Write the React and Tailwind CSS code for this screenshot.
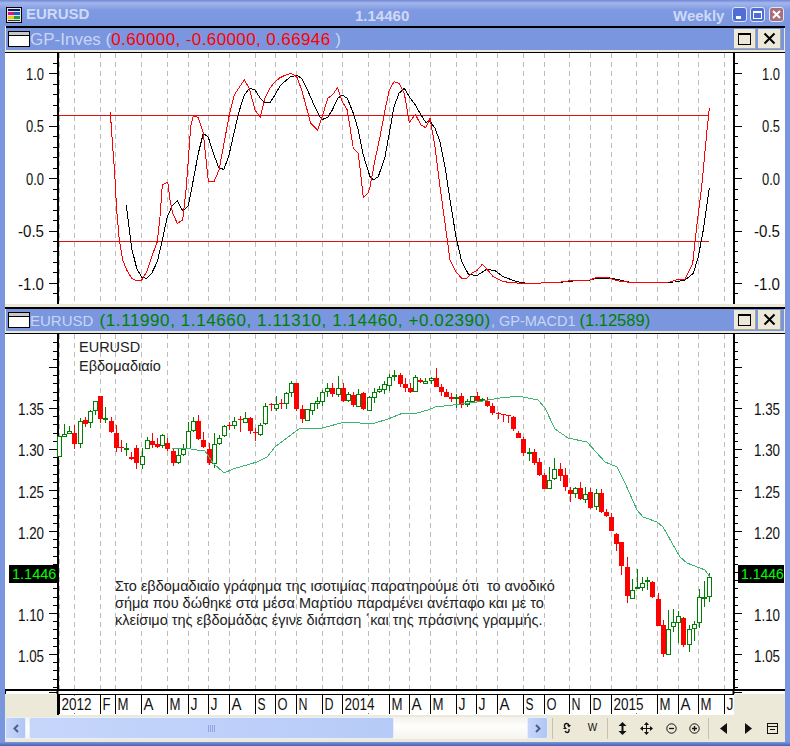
// weekly EURUSD chart window, XP style
const GRID = [59, 74, 100, 115, 141, 167, 188, 208, 229, 255, 275, 296, 322, 342, 368, 389, 409, 430, 456, 476, 497, 523, 544, 569, 590, 611, 636, 657, 678, 698, 724];

const MONTHS = [
  [59, "2012"], [100, "F"], [115, "M"], [141, "A"], [167, "M"], [188, "J"], [208, "J"], [229, "A"], [255, "S"], [275, "O"], [296, "N"], [322, "D"], [342, "2014"],
  [389, "M"], [409, "A"], [430, "M"], [456, "J"], [476, "J"], [497, "A"], [523, "S"], [544, "O"], [569, "N"], [590, "D"], [611, "2015"], [657, "M"], [678, "A"], [698, "M"], [724, "J"],
];
const LABEL_W = { F: 8, M: 11, A: 10, J: 7, S: 8, O: 10, N: 9, D: 9 };

// traced from the picture: colour, body top, body bottom, wick top, wick bottom (3x crop units)
const C6 = [
  ["g",168,232,168,232],["g",163,170,133,170],["g",153,163,138,163],["r",159,191,135,207],["g",123,193,115,203],["r",120,131,110,140],["g",93,130,90,143],["g",63,93,63,105],["r",48,117,48,130],["g",114,116,82,128],
  ["r",124,157,112,160],["r",159,203,135,215],["r",201,205,180,215],["g",205,211,190,227],["r",231,236,215,240],["r",204,250,195,267],["g",229,256,205,268],["g",180,208,172,208],["r",184,194,160,205],["r",192,200,175,205],
  ["g",165,198,163,205],["r",189,208,175,212],["r",213,248,205,258],["g",226,250,205,252],["g",208,226,193,228],["g",153,208,125,208],["g",124,153,110,155],["r",123,178,105,180],["r",180,200,155,203],["r",208,248,190,255],
  ["g",193,253,160,265],["g",175,193,165,195],["g",138,169,135,170],["r",134,137,125,150],["g",124,139,110,148],["r",118,120,108,155],["g",115,128,95,130],["r",114,152,112,162],["r",156,160,145,182],["g",136,166,128,168],["g",78,133,68,135],
];
const C7 = [
  ["r",132,135,128,152],["g",133,148,108,152],["r",129,133,118,148],["g",99,133,95,148],["g",70,100,62,112],["r",69,148,69,152],["r",148,177,135,190],["g",148,182,148,182],["g",129,152,129,165],["g",124,133,112,146],
  ["g",96,125,90,137],["g",85,97,70,112],["r",84,101,70,112],["g",85,104,48,110],["r",84,122,68,125],["g",103,124,95,125],["r",105,135,95,140],["g",103,140,88,142],["r",99,147,95,150],["g",112,152,108,152],
  ["g",97,115,85,128],["g",88,97,78,98],["g",72,89,62,103],["g",52,77,42,92],["g",46,52,30,62],["r",46,72,40,80],["r",72,84,55,95],["r",84,95,70,100],["g",52,95,45,95],["r",60,65,55,70],
  ["g",64,72,55,72],["g",55,64,50,72],["r",54,80,25,82],["r",80,95,72,108],["r",95,112,88,112],["r",112,118,100,125],["g",112,114,103,145],["r",108,135,100,145],["g",123,135,118,142],["g",108,125,108,130],
  ["r",108,122,97,125],["g",118,120,113,125],["r",122,138,112,142],["r",138,160,128,165],["r",160,163,155,178],["r",163,165,163,185],["r",165,169,165,188],
];
const C8 = [
  ["r",80,118,78,122],["r",128,143,122,145],["r",147,188,140,198],["g",185,190,175,212],["r",187,218,178,225],["r",216,254,205,258],["r",255,297,248,298],["g",270,298,230,298],["g",238,268,205,270],["r",237,257,218,272],
  ["r",255,292,235,303],["r",300,312,290,335],["g",295,311,290,325],["r",295,327,277,330],["g",313,331,292,340],["r",307,354,295,356],["g",310,352,298,360],["r",310,365,297,368],["r",367,378,358,380],["r",382,422,370,422],
  ["r",433,461,430,482],["r",457,527,455,555],["r",532,617,502,638],["g",601,628,568,628],["g",592,596,537,596],["g",578,593,560,602],["g",570,574,562,600],["r",575,621,572,623],["r",627,707,610,707],["r",705,792,690,800],
  ["g",716,796,660,796],["g",695,712,658,725],["g",677,700,662,760],["r",685,765,680,772],["g",718,766,705,785],["g",701,718,693,752],["g",620,700,597,715],["g",620,622,572,650],["g",560,620,548,635],
];
const lift = (rows, y0) => rows.map(([c, a, b, d, e]) => [c, y0 + a / 3, y0 + b / 3, y0 + d / 3, y0 + e / 3]);
const CANDLES = [...lift(C6, 380), ...lift(C7, 360), ...lift(C8, 390)];

const MA = [[172,448],[185,448],[197,450],[205,451],[213,463],[224,473],[233,469],[257,462],[267,457],[275,447],[287,438],[300,428],[305,428],[322,428],[345,422],[360,423],[375,423],[388,419],[403,413],[417,413],[428,410],[435,407],[453,405],[477,402],[500,398],[510,397],[518,396],[538,400],[545,408],[555,429],[568,438],[587,442],[605,462],[617,467],[625,483],[637,510],[643,517],[657,522],[663,527],[680,557],[687,563],[705,570],[710,577]];

const RED_A = [[31,157],[38,260],[44,340],[50,450],[58,540],[68,600],[80,630],[95,655],[110,663],[125,660],[140,635],[155,590],[172,545],[180,470],[187,375],[203,366],[210,420],[218,460],[232,490],[248,480],[258,390],[265,300],[272,200],[280,168],[295,172],[310,220],[325,363],[342,365],[357,330],[372,250],[388,165],[403,105],[417,83],[433,60],[448,85],[465,150],[481,172],[495,115],[510,85],[525,65],[540,53],[557,45],[572,40],[590,50],[605,90],[620,145],[632,190],[653,210],[668,165],[683,115],[697,105],[713,83],[727,125],[742,150],[760,265],[775,280],[790,412],[805,398]];
const RED_B = [[0,380],[15,300],[30,230],[45,150],[58,90],[72,65],[87,70],[103,100],[118,188],[136,163],[153,195],[167,203],[180,175],[195,260],[210,380],[225,490],[240,600],[258,635],[275,655],[290,655],[305,640],[320,632],[337,613],[355,632],[370,650],[400,665],[440,669],[470,670],[560,668],[610,661],[660,660],[680,652],[710,652],[740,662],[780,667],[900,666],[925,658],[945,658],[968,610],[980,500],[995,380],[1010,220],[1018,145]];
const BLK_A = [[79,435],[87,500],[95,565],[110,625],[125,652],[140,655],[155,640],[172,605],[187,540],[202,470],[217,437],[232,423],[248,452],[265,438],[280,360],[295,280],[310,220],[325,232],[342,285],[357,325],[372,328],[387,285],[403,215],[417,155],[433,105],[448,85],[465,90],[481,115],[495,128],[510,128],[525,105],[540,78],[557,62],[572,50],[590,46],[605,55],[620,85],[640,130],[660,172],[668,178],[683,172],[697,150],[713,115],[727,105],[742,115],[760,160],[775,210],[790,285]];
const BLK_B = [[0,350],[10,360],[25,350],[45,290],[58,220],[72,140],[87,100],[103,85],[118,110],[136,135],[153,165],[167,187],[180,183],[195,205],[210,245],[225,320],[240,420],[258,530],[275,605],[295,642],[320,647],[350,628],[375,632],[400,650],[440,665],[470,670],[560,668],[610,663],[660,660],[680,655],[720,654],[750,660],[780,667],[915,666],[945,660],[970,640],[985,590],[1000,510],[1010,440],[1018,385]];

const crop = (pts, x0) => pts.map(([x, y]) => `${(x0 + x / 3).toFixed(1)},${(60 + y / 3).toFixed(1)}`);
const pts = (a, b) => [...crop(a, 100), ...crop(b, 370)].join(" ");

function Grid({ y1, y2 }) {
  return GRID.map((x) => (
    <line key={x} x1={x + 0.5} x2={x + 0.5} y1={y1} y2={y2} stroke="#bdbdbd" strokeDasharray="5 4" shapeRendering="crispEdges" />
  ));
}

function Axis({ y1, y2, ticks, labels }) {
  return (
    <g fontSize="16" fill="#111">
      <line x1="57.5" x2="57.5" y1={y1} y2={y2} stroke="#000" strokeWidth="2" shapeRendering="crispEdges" />
      <line x1="733.5" x2="733.5" y1={y1} y2={y2} stroke="#000" strokeWidth="2" shapeRendering="crispEdges" />
      {ticks.map(([y, major]) => (
        <g key={y} stroke="#000" shapeRendering="crispEdges">
          <line x1={major ? 49 : 53} x2="57" y1={y} y2={y} />
          <line x1="734" x2={major ? 742 : 738} y1={y} y2={y} />
        </g>
      ))}
      {labels.map(([y, t]) => {
        const ww = t.length === 3 ? 18 : 26;
        return (
          <g key={t}>
            <text x={44 - ww} y={y + 7} textLength={ww} lengthAdjust="spacingAndGlyphs">{t}</text>
            <text x={780 - ww} y={y + 7} textLength={ww} lengthAdjust="spacingAndGlyphs">{t}</text>
          </g>
        );
      })}
    </g>
  );
}

function TopChart() {
  const ticks = [];
  for (let k = -1; k <= 21; k++) ticks.push([Math.round(73.3 + 10.48 * k) + 0.5, k % 5 === 0]);
  const labels = [[73, "1.0"], [125, "0.5"], [178, "0.0"], [230, "-0.5"], [283, "-1.0"]];
  return (
    <svg className="block bg-white" width="780" height="251" viewBox="5 53 780 251">
      <Grid y1={53} y2={304} />
      <Axis y1={53} y2={304} ticks={ticks} labels={labels} />
      <line x1="59" x2="709" y1="115.5" y2="115.5" stroke="#e01010" shapeRendering="crispEdges" />
      <line x1="59" x2="709" y1="241.5" y2="241.5" stroke="#e01010" shapeRendering="crispEdges" />
      <polyline points={pts(BLK_A, BLK_B)} fill="none" stroke="#000" shapeRendering="crispEdges" />
      <polyline points={pts(RED_A, RED_B)} fill="none" stroke="#ff0000" shapeRendering="crispEdges" />
    </svg>
  );
}

function Candle({ i, d }) {
  const [c, top, bot, hi, lo] = d;
  const x = Math.round(59 + 5.16 * i);
  const t = Math.round(top);
  const b = Math.max(Math.round(bot), t + 1);
  const wick = (
    <line x1={x + 0.5} x2={x + 0.5} y1={Math.round(hi)} y2={Math.round(lo)} stroke={c === "r" ? "#ff0000" : "#008000"} />
  );
  if (c === "r") {
    return (
      <g shapeRendering="crispEdges">
        {wick}
        <rect x={x - 2} y={t} width="5" height={b - t} fill="#ff0000" />
      </g>
    );
  }
  return (
    <g shapeRendering="crispEdges">
      {wick}
      {b - t < 3 ? (
        <rect x={x - 2} y={t} width="5" height="2" fill="#008000" />
      ) : (
        <rect x={x - 1.5} y={t + 0.5} width="4" height={b - t - 1} fill="#fff" stroke="#008000" />
      )}
    </g>
  );
}

function MainChart() {
  const ticks = [];
  for (let k = -8; k <= 34; k++) ticks.push([Math.round(408 + 8.2 * k) + 0.5, k % 5 === 0]);
  const labels = [[408, "1.35"], [449, "1.30"], [491, "1.25"], [532, "1.20"], [614, "1.10"], [655, "1.05"]];
  return (
    <svg className="block bg-white" width="780" height="355" viewBox="5 334 780 355">
      <Grid y1={334} y2={689} />
      <Axis y1={334} y2={689} ticks={ticks} labels={labels} />
      {CANDLES.map((d, i) => (
        <Candle key={i} i={i} d={d} />
      ))}
      <polyline points={MA.map((p) => p.join(",")).join(" ")} fill="none" stroke="#3cb371" shapeRendering="crispEdges" />
    </svg>
  );
}

function TimeAxis() {
  return (
    <svg className="block" width="677" height="21" viewBox="57 694 677 21">
      <rect x="57" y="694" width="677" height="21" fill="#fff" />
      <line x1="57" x2="734" y1="694.5" y2="694.5" stroke="#000" shapeRendering="crispEdges" />
      <line x1="57.5" x2="57.5" y1="694" y2="715" stroke="#000" strokeWidth="2" shapeRendering="crispEdges" />
      {[74, 368, 636].map((x) => (
        <line key={x} x1={x + 0.5} x2={x + 0.5} y1="695" y2="715" stroke="#777" strokeDasharray="1 17" shapeRendering="crispEdges" />
      ))}
      {MONTHS.map(([x, t]) => (
        <g key={x + t}>
          <line x1={x + 0.5} x2={x + 0.5} y1="694" y2="714" stroke="#000" shapeRendering="crispEdges" />
          <text x={x + 2.5} y="710" fontSize="16" fill="#111" textLength={t.length === 4 ? 30 : LABEL_W[t]} lengthAdjust="spacingAndGlyphs">{t}</text>
        </g>
      ))}
    </svg>
  );
}

function PanelIcon() {
  return (
    <div className="w-[22px] h-[16px] border border-black bg-white flex flex-col shrink-0">
      <div className="h-[4px] bg-[#c8c8c8] border-b border-black" />
    </div>
  );
}

function PanelButtons() {
  return (
    <div className="flex gap-[2px] ml-auto">
      <div className="w-[22px] h-[20px] bg-[#ece9d8] border-b border-r border-[#aca899] flex items-center justify-center">
        <div className="w-[13px] h-[12px] border border-black border-t-[2px]" />
      </div>
      <div className="w-[23px] h-[20px] bg-[#ece9d8] border-b border-r border-[#aca899] flex items-center justify-center">
        <svg width="13" height="13" viewBox="0 0 13 13">
          <path d="M1.5 1.5 L11.5 11.5 M11.5 1.5 L1.5 11.5" stroke="#000" strokeWidth="2" />
        </svg>
      </div>
    </div>
  );
}

function PanelHeader({ children }) {
  return (
    <div className="h-[22px] bg-[#7a96df] flex items-center pl-[2px] pr-[3px] text-[16px] leading-none text-[#c9d5f5] whitespace-pre">
      <PanelIcon />
      <span>{children}</span>
      <PanelButtons />
    </div>
  );
}

function WinBtn({ className, children }) {
  return (
    <div className={`w-[15px] h-[15px] rounded-[3px] border border-[#dfe6f8] flex items-center justify-center ${className}`}>
      {children}
    </div>
  );
}

function Tool({ w, children }) {
  return <div className={`${w} flex items-center justify-center`}>{children}</div>;
}

function Sep() {
  return <div className="w-px h-[21px] bg-[#c5c2b2] shrink-0" />;
}

function ScrollBtn({ d }) {
  return (
    <div className="w-[21px] h-[22px] rounded-[2px] border border-[#e8effc] bg-[linear-gradient(90deg,#c6d6fb,#b2c6f5)] flex items-center justify-center shrink-0">
      <svg width="8" height="9" viewBox="0 0 8 9">
        <path d={d} fill="none" stroke="#4d6185" strokeWidth="2" />
      </svg>
    </div>
  );
}

export default function App() {
  return (
    <div className="w-[790px] h-[746px] overflow-hidden bg-[#7a96df] font-['Liberation_Sans',Arial,sans-serif] flex flex-col relative">
      {/* Title bar */}
      <div className="h-[26px] shrink-0 bg-[linear-gradient(180deg,#6f88d8_0px,#a3b6ec_3px,#7f9ae2_10px,#7a96df_100%)] flex items-center relative text-[15px] font-bold text-[#ced9f6]">
        <svg className="ml-[6px] mt-[3px]" width="16" height="16" viewBox="0 0 16 16">
          <rect x="0.5" y="0.5" width="15" height="15" fill="#e8e8e0" stroke="#000" />
          <rect x="2" y="2" width="12" height="2" fill="#0a1a6a" />
          <rect x="2" y="5" width="6" height="3" fill="#e0108a" />
          <rect x="8" y="5" width="6" height="3" fill="#1060d0" />
          <rect x="2" y="9" width="6" height="3" fill="#e8d010" />
          <rect x="8" y="9" width="6" height="3" fill="#20a040" />
          <rect x="2" y="13" width="12" height="1" fill="#333" />
        </svg>
        <span className="ml-[4px] mt-[2px]">EURUSD</span>
        <span className="absolute left-[355px] top-[5px]">1.14460</span>
        <span className="absolute left-[673px] top-[5px]">Weekly</span>
        <div className="absolute left-[732px] top-[7px] flex gap-[3px]">
          <WinBtn className="bg-[#4f6ed6]">
            <div className="w-[5px] h-[3px] bg-white mt-[6px] -ml-[2px]" />
          </WinBtn>
          <WinBtn className="bg-[#4f6ed6]">
            <div className="w-[9px] h-[8px] border border-white border-t-[2px]" />
          </WinBtn>
          <WinBtn className="bg-[#a8707c] ml-[1px]">
            <svg width="9" height="9" viewBox="0 0 9 9">
              <path d="M1 1 L8 8 M8 1 L1 8" stroke="#fff" strokeWidth="2" />
            </svg>
          </WinBtn>
        </div>
      </div>

      {/* Client area */}
      <div className="mx-[5px] flex-1 flex flex-col bg-[#ece9d8] min-h-0">
        {/* Indicator pane */}
        <div className="h-[2px] bg-black ml-px" />
        <div className="px-px">
          <PanelHeader>
            <span className="text-[17px]">GP-Inves (</span>
            <span className="text-[17px] tracking-[0.4px] text-[#ff0000]">0.60000, -0.60000, 0.66946</span>
            <span className="text-[17px]"> )</span>
          </PanelHeader>
        </div>
        <div className="h-[2px] bg-[#ece9d8]" />
        <div className="h-px bg-black" />
        <TopChart />

        {/* Price pane */}
        <div className="h-[3px] bg-[#ece9d8]" />
        <div className="h-[2px] bg-black" />
        <div className="px-px">
          <PanelHeader>
            <span className="text-[15px]">EURUSD </span>
            <span className="text-[17px] tracking-[0.6px] pl-[2px] text-[#008000]">(1.11990, 1.14660, 1.11310, 1.14460, +0.02390)</span>
            <span className="text-[14.5px]">, GP-MACD1 </span>
            <span className="text-[16.5px] text-[#008000]">(1.12589)</span>
          </PanelHeader>
        </div>
        <div className="h-[2px] bg-[#ece9d8]" />
        <div className="h-px bg-black" />
        <div className="relative">
          <MainChart />
          <div className="absolute left-[74px] top-[4px] text-[14.5px] leading-[19px] text-[#222]">
            <div>EURUSD</div>
            <div>Εβδομαδιαίο</div>
          </div>
          <div className="absolute left-[110px] top-[244px] text-[14.5px] leading-[17px] text-[#222] whitespace-pre">
            <div>Στο εβδομαδιαίο γράφημα της ισοτιμίας παρατηρούμε ότι  το ανοδικό</div>
            <div>σήμα που δώθηκε στα μέσα Μαρτίου παραμένει ανέπαφο και με το</div>
            <div>κλείσιμο της εβδομάδας έγινε διάπαση ΄και της πράσινης γραμμής.</div>
          </div>
          <div className="absolute left-[4px] top-[231px] w-[48px] h-[18px] bg-black text-[#00ff00] text-[14.5px] leading-[18px] pl-[3px] whitespace-nowrap">1.1446</div>
          <div className="absolute left-[733px] top-[231px] w-[46px] h-[18px] bg-black text-[#00ff00] text-[14px] leading-[18px] pl-[3px] whitespace-nowrap">1.1446</div>
        </div>

        {/* Time axis */}
        <div className="h-[5px] border-t-2 border-black bg-white">
          <svg className="block" width="780" height="3" viewBox="0 0 780 3">
            <line x1="0.5" x2="0.5" y1="0" y2="3" stroke="#000" />
            <line x1="44" x2="52" y1="1.5" y2="1.5" stroke="#000" />
            <line x1="52.5" x2="52.5" y1="0" y2="3" stroke="#000" strokeWidth="2" />
            <line x1="728.5" x2="728.5" y1="0" y2="3" stroke="#000" strokeWidth="2" />
            <line x1="729" x2="737" y1="1.5" y2="1.5" stroke="#000" />
          </svg>
        </div>
        <div className="flex h-[21px]">
          <div className="w-[52px]" />
          <TimeAxis />
        </div>

        {/* Scroll bar and toolbar */}
        <div className="h-[2px]" />
        <div className="flex h-[22px]">
          <ScrollBtn d="M6 1 L2.5 4.5 L6 8" />
          <div className="w-[501px] bg-[linear-gradient(180deg,#f3f1ec,#fefefe_40%,#f6f4ee)] pl-[3px]">
            <div className="w-[365px] h-[22px] rounded-[2px] border border-[#e8effc] bg-[linear-gradient(90deg,#c6d6fb,#b7cbf8)] flex items-center justify-center gap-px">
              {[0, 1, 2, 3].map((n) => (
                <div key={n} className="w-px h-[7px] bg-[#8ea5dd]" />
              ))}
            </div>
          </div>
          <ScrollBtn d="M2 1 L5.5 4.5 L2 8" />
          <div className="flex-1 flex items-center text-[#111] pl-[4px]">
            <Sep />
            <Tool w="w-[28px]">
              <svg width="10" height="12" viewBox="0 0 10 12">
                <path d="M7 3 C6 1 3 1 2.5 3 L2.5 5 M7 7 L7 9 C6.5 11 4 11 3 9" fill="none" stroke="#111" strokeWidth="1.3" />
                <path d="M5 3 L9 3 L7 5.5 Z M1 7 L5 7 L3 4.5 Z" fill="#111" />
              </svg>
            </Tool>
            <Tool w="w-[23px]">
              <span className="text-[10px] leading-none">W</span>
            </Tool>
            <div className="w-[3px]" />
            <Sep />
            <Tool w="w-[28px]">
              <svg width="9" height="13" viewBox="0 0 9 13">
                <path d="M4.5 0 L8.5 4 L5.5 4 L5.5 9 L8.5 9 L4.5 13 L0.5 9 L3.5 9 L3.5 4 L0.5 4 Z" fill="#111" />
              </svg>
            </Tool>
            <Tool w="w-[20px]">
              <svg width="13" height="13" viewBox="0 0 13 13">
                <path d="M6.5 1 L6.5 12 M1 6.5 L12 6.5" stroke="#111" />
                <path d="M6.5 0 L9 3 L4 3 Z M6.5 13 L9 10 L4 10 Z M0 6.5 L3 4 L3 9 Z M13 6.5 L10 4 L10 9 Z" fill="#111" />
              </svg>
            </Tool>
            <Tool w="w-[30px]">
              <svg width="11" height="11" viewBox="0 0 11 11">
                <circle cx="5.5" cy="5.5" r="4.7" fill="none" stroke="#111" />
                <path d="M3 5.5 L8 5.5" stroke="#111" strokeWidth="1.3" />
              </svg>
            </Tool>
            <Tool w="w-[16px]">
              <svg width="11" height="11" viewBox="0 0 11 11">
                <circle cx="5.5" cy="5.5" r="4.7" fill="none" stroke="#111" />
                <path d="M3 5.5 L8 5.5 M5.5 3 L5.5 8" stroke="#111" strokeWidth="1.3" />
              </svg>
            </Tool>
            <div className="w-[6px]" />
            <Sep />
            <Tool w="w-[28px]">
              <svg width="7" height="11" viewBox="0 0 7 11">
                <path d="M7 0 L0 5.5 L7 11 Z" fill="#111" />
              </svg>
            </Tool>
            <Tool w="w-[22px]">
              <svg width="7" height="11" viewBox="0 0 7 11">
                <path d="M0 0 L7 5.5 L0 11 Z" fill="#111" />
              </svg>
            </Tool>
            <Tool w="w-[26px]">
              <svg width="11" height="11" viewBox="0 0 11 11">
                <rect x="0.5" y="0.5" width="10" height="10" fill="none" stroke="#111" />
                <path d="M0.5 3.5 L10.5 3.5 M3 6.5 L8 6.5" stroke="#111" />
              </svg>
            </Tool>
          </div>
        </div>
        <div className="h-[3px]" />
      </div>

      {/* Bottom frame */}
      <div className="h-[4px] shrink-0 bg-[linear-gradient(180deg,#7a96df,#4a5fb0)]" />
    </div>
  );
}
